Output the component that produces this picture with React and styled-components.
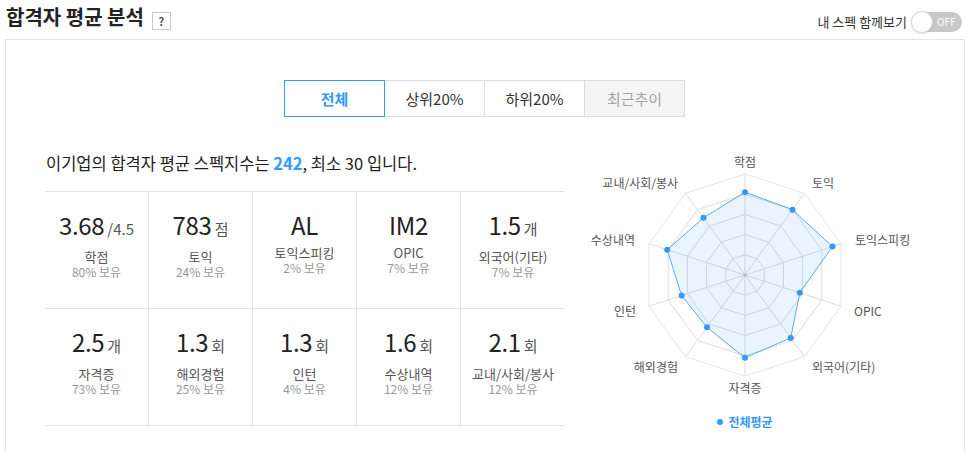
import React from "react";
import styled, { createGlobalStyle } from "styled-components";

const GlobalStyle = createGlobalStyle`
  body {
    margin: 0;
    background: #fff;
    font-family: "Noto Sans CJK KR", "Noto Sans", sans-serif;
    color: #222;
  }
`;

const tabs = [
  { name: "전체", state: "active" },
  { name: "상위20%" },
  { name: "하위20%" },
  { name: "최근추이", state: "disabled" },
];

const specs = [
  { value: "3.68", unit: "/4.5", label: "학점", own: "80% 보유" },
  { value: "783", unit: "점", label: "토익", own: "24% 보유" },
  { value: "AL", label: "토익스피킹", own: "2% 보유" },
  { value: "IM2", label: "OPIC", own: "7% 보유" },
  { value: "1.5", unit: "개", label: "외국어(기타)", own: "7% 보유" },
  { value: "2.5", unit: "개", label: "자격증", own: "73% 보유" },
  { value: "1.3", unit: "회", label: "해외경험", own: "25% 보유" },
  { value: "1.3", unit: "회", label: "인턴", own: "4% 보유" },
  { value: "1.6", unit: "회", label: "수상내역", own: "12% 보유" },
  { value: "2.1", unit: "회", label: "교내/사회/봉사", own: "12% 보유" },
];

// radar axes, clockwise from the top
const axes = [
  { name: "학점", v: 0.82, dx: 0, dy: -114, anchor: "middle" },
  { name: "토익", v: 0.8, dx: 67, dy: -93, anchor: "start" },
  { name: "토익스피킹", v: 0.91, dx: 110, dy: -36, anchor: "start" },
  { name: "OPIC", v: 0.57, dx: 109, dy: 35, anchor: "start" },
  { name: "외국어(기타)", v: 0.77, dx: 67, dy: 91, anchor: "start" },
  { name: "자격증", v: 0.82, dx: 0, dy: 112, anchor: "middle" },
  { name: "해외경험", v: 0.64, dx: -67, dy: 91, anchor: "end" },
  { name: "인턴", v: 0.66, dx: -109, dy: 35, anchor: "end" },
  { name: "수상내역", v: 0.81, dx: -110, dy: -36, anchor: "end" },
  { name: "교내/사회/봉사", v: 0.7, dx: -67, dy: -93, anchor: "end" },
];

const CX = 179;
const CY = 135;
const R = 101;

const pt = (i, r) => {
  const a = (Math.PI * 2 * i) / axes.length - Math.PI / 2;
  return [CX + Math.cos(a) * r, CY + Math.sin(a) * r];
};

const ring = (r) => axes.map((_, i) => pt(i, r).join(",")).join(" ");

function Radar() {
  const data = axes.map((a, i) => pt(i, a.v * R));
  return (
    <svg width="358" height="262" viewBox="0 0 358 262">
      {[1, 2, 3, 4, 5].map((k) => (
        <polygon
          key={k}
          points={ring((R * k) / 5)}
          fill="none"
          stroke={k === 5 ? "#e6e6e6" : "#dcdcdc"}
          strokeWidth="1"
        />
      ))}
      {axes.map((_, i) => {
        const [x, y] = pt(i, R);
        return <line key={i} x1={CX} y1={CY} x2={x} y2={y} stroke="#dcdcdc" strokeWidth="1" />;
      })}
      <circle cx={CX} cy={CY} r="1.5" fill="#bbb" />
      <polygon
        points={data.map((p) => p.join(",")).join(" ")}
        fill="rgba(51,153,255,0.11)"
        stroke="#5aa8f8"
        strokeWidth="1"
      />
      {data.map(([x, y], i) => (
        <circle key={i} cx={x} cy={y} r="3" fill="#3399ff" />
      ))}
      {axes.map((a) => (
        <text
          key={a.name}
          x={CX + a.dx}
          y={CY + a.dy}
          textAnchor={a.anchor}
          dominantBaseline="central"
          fontSize="12"
          fill="#555"
          fontFamily='"Noto Sans CJK KR", "Noto Sans", sans-serif'
        >
          {a.name}
        </text>
      ))}
    </svg>
  );
}

export default function App() {
  return (
    <>
      <GlobalStyle />
      <Header>
        <TitleRow>
          <Title>합격자 평균 분석</Title>
          <HelpBox>?</HelpBox>
        </TitleRow>
        <ToggleRow>
          <ToggleText>내 스펙 함께보기</ToggleText>
          <Toggle>
            <Knob />
            <span>OFF</span>
          </Toggle>
        </ToggleRow>
      </Header>
      <Panel>
        <Tabs>
          {tabs.map((t) => (
            <Tab key={t.name} $state={t.state}>
              {t.name}
            </Tab>
          ))}
        </Tabs>
        <Content>
          <LeftCol>
            <Summary>
              이기업의 합격자 평균 스펙지수는 <b>242</b>, 최소 30 입니다.
            </Summary>
            <SpecGrid>
              {specs.map((s, i) => (
                <Cell key={i}>
                  <Value>
                    {s.value}
                    {s.unit && <Unit>{s.unit}</Unit>}
                  </Value>
                  <Label>{s.label}</Label>
                  <Own>{s.own}</Own>
                </Cell>
              ))}
            </SpecGrid>
          </LeftCol>
          <RightCol>
            <Radar />
            <Legend>
              <Dot />
              전체평균
            </Legend>
          </RightCol>
        </Content>
      </Panel>
    </>
  );
}

const Header = styled.div`
  height: 39px;
  display: flex;
  justify-content: space-between;
  align-items: flex-start;
  padding: 0 6px;
`;

const TitleRow = styled.div`
  display: flex;
  align-items: flex-end;
  padding-top: 4px;
`;

const Title = styled.h2`
  margin: 0;
  font-size: 20px;
  line-height: 26px;
  font-weight: 700;
  color: #222;
`;

const HelpBox = styled.span`
  width: 17px;
  height: 16px;
  margin-left: 8px;
  border: 1px solid #c8c8c8;
  display: flex;
  align-items: center;
  justify-content: center;
  font-size: 11px;
  font-weight: 700;
  color: #555;
  line-height: 1;
`;

const ToggleRow = styled.div`
  display: flex;
  align-items: center;
  padding-top: 12px;
`;

const ToggleText = styled.span`
  font-size: 13px;
  line-height: 20px;
  color: #333;
  margin-right: 5px;
`;

const Toggle = styled.div`
  position: relative;
  width: 50px;
  height: 20px;
  border-radius: 10px;
  background: #c8c8c8;
  display: flex;
  align-items: center;
  justify-content: flex-end;
  padding-right: 6px;
  box-sizing: border-box;
  span {
    font-size: 10px;
    line-height: 1;
    color: #fff;
    letter-spacing: 0.2px;
  }
`;

const Knob = styled.i`
  position: absolute;
  left: -1px;
  top: -1px;
  width: 20px;
  height: 20px;
  border-radius: 50%;
  background: #fff;
  border: 1px solid #d6d6d6;
  box-shadow: 0 1px 2px rgba(0, 0, 0, 0.12);
`;

const Panel = styled.div`
  margin-left: 5px;
  width: 960px;
  height: 440px;
  box-sizing: border-box;
  border: 1px solid #e5e5e5;
  padding: 40px 40px 0 39px;
`;

const Tabs = styled.div`
  display: flex;
  justify-content: center;
`;

const Tab = styled.div`
  position: relative;
  width: 101px;
  height: 37px;
  box-sizing: border-box;
  margin-left: -1px;
  border: 1px solid ${(p) => (p.$state === "active" ? "#3399ff" : "#dcdcdc")};
  z-index: ${(p) => (p.$state === "active" ? 1 : 0)};
  background: ${(p) => (p.$state === "disabled" ? "#f5f5f5" : "#fff")};
  color: ${(p) =>
    p.$state === "active" ? "#3399ff" : p.$state === "disabled" ? "#a5a5a5" : "#333"};
  font-weight: ${(p) => (p.$state === "active" ? 700 : 400)};
  font-size: 15px;
  display: flex;
  align-items: center;
  justify-content: center;
  &:first-child {
    margin-left: 0;
  }
`;

const Content = styled.div`
  display: flex;
  margin-top: 23px;
`;

const LeftCol = styled.div`
  width: 520px;
  flex-shrink: 0;
`;

const Summary = styled.p`
  margin: 11px 0 16px 1px;
  font-size: 16.5px;
  line-height: 24px;
  color: #222;
  b {
    color: #3399ff;
    font-weight: 700;
  }
`;

const SpecGrid = styled.div`
  display: grid;
  grid-template-columns: repeat(5, 1fr);
  border-top: 1px solid #e3e3e3;
`;

const Cell = styled.div`
  height: 117px;
  box-sizing: border-box;
  border-bottom: 1px solid #e3e3e3;
  border-right: 1px solid #e3e3e3;
  padding-top: 19px;
  text-align: center;
  &:nth-child(5n) {
    border-right: none;
  }
`;

const Value = styled.div`
  font-size: 24px;
  line-height: 28px;
  color: #222;
  letter-spacing: -0.3px;
`;

const Unit = styled.span`
  font-size: 15px;
  color: #555;
  margin-left: 3px;
  letter-spacing: 0;
`;

const Label = styled.div`
  margin-top: 6px;
  font-size: 13px;
  line-height: 16px;
  color: #555;
`;

const Own = styled.div`
  font-size: 12px;
  line-height: 14px;
  color: #999;
`;

const RightCol = styled.div`
  width: 358px;
  margin-left: 1px;
  display: flex;
  flex-direction: column;
  align-items: center;
`;

const Legend = styled.div`
  margin-top: 11px;
  display: flex;
  align-items: center;
  font-size: 12px;
  line-height: 18px;
  font-weight: 700;
  color: #3399ff;
`;

const Dot = styled.i`
  width: 6px;
  height: 6px;
  border-radius: 50%;
  background: #3399ff;
  margin-right: 5px;
`;
